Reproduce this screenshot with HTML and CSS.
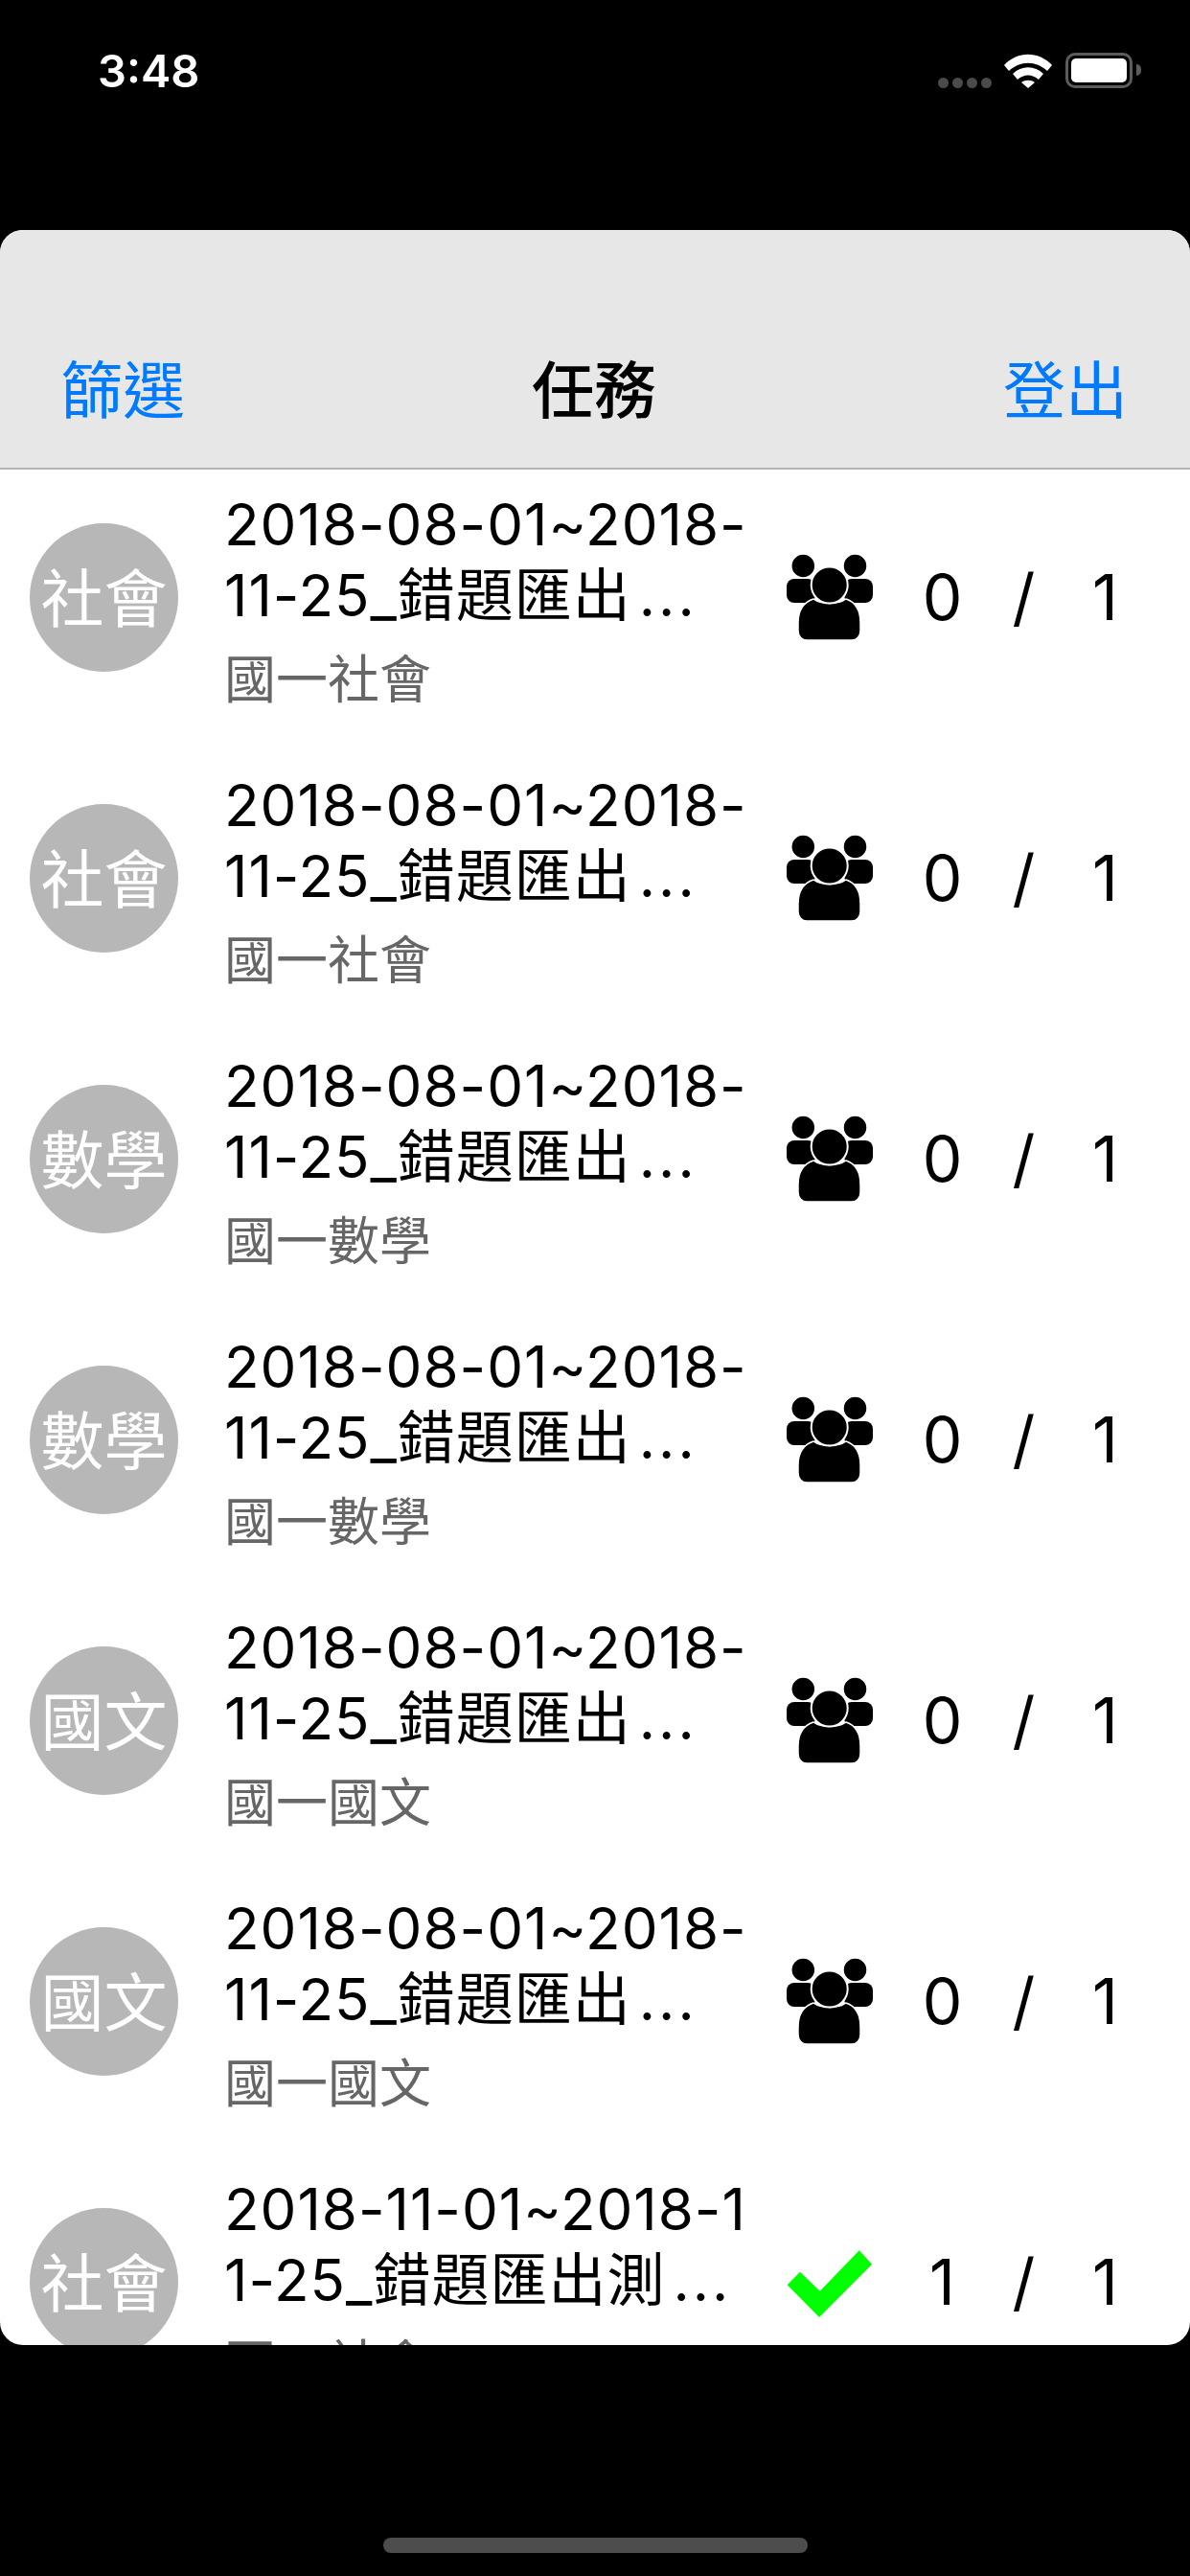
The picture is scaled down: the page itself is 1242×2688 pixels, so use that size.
FILE: index.html
```html
<!DOCTYPE html>
<html lang="zh-Hant">
<head>
    <meta charset="UTF-8">
    <title>任務</title>
    <link rel="stylesheet" href="styles.css">
</head>
<body>
<svg class="defs">
    <symbol id="group" viewBox="0 0 90 90">
        <rect x="0" y="26" width="30" height="25" rx="8"/>
        <rect x="60" y="26" width="30" height="25" rx="8"/>
        <circle cx="17.3" cy="12.5" r="12.5" stroke="#fff" stroke-width="1.5"/>
        <circle cx="71.5" cy="12.5" r="12.5" stroke="#fff" stroke-width="1.5"/>
        <path d="M12 72C12 58 19 50 28 47C36 53 54 53 62 47C71 50 77 58 77 72V80C77 86 73 90 68 90H21C16 90 12 86 12 80Z" stroke="#fff" stroke-width="1.5"/>
        <circle cx="44.7" cy="32.5" r="19" stroke="#fff" stroke-width="2"/>
    </symbol>
    <symbol id="check" viewBox="0 0 90 70">
        <path d="M75.7 .3L89 14.7L34 70L.7 36.3L14 22.7L34.7 42.7Z"/>
    </symbol>
</svg>

<div class="status_bar">
    <span class="time">3:48</span>
    <div class="status_icons">
        <div class="dots"><i></i><i></i><i></i><i></i></div>
        <svg class="wifi" width="50" height="36" viewBox="0 0 50 36">
            <path d="M0 12C14 -3 36 -3 50 12L45 18C33 7 17 7 5 18Z"/>
            <path d="M9 21C18 12 32 12 41 21L36 27C29 21 21 21 14 27Z"/>
            <path d="M18 30C22 27 28 27 32 30L25 36Z"/>
        </svg>
        <div class="battery"><div class="battery_fill"></div></div>
        <div class="battery_nub"></div>
    </div>
</div>

<div class="sheet">
    <div class="nav">
        <a class="nav_btn">篩選</a>
        <h1 class="nav_title">任務</h1>
        <a class="nav_btn">登出</a>
    </div>
    <div class="list">
        <div class="row">
            <div class="badge">社會</div>
            <div class="info">
                <div class="title">2018-08-01~2018-</div>
                <div class="title">11-25_錯題匯出<span class="more">...</span></div>
                <div class="sub">國一社會</div>
            </div>
            <svg class="icon_group"><use href="#group"/></svg>
            <div class="count"><span>0</span><span>/</span><span>1</span></div>
        </div>
        <div class="row">
            <div class="badge">社會</div>
            <div class="info">
                <div class="title">2018-08-01~2018-</div>
                <div class="title">11-25_錯題匯出<span class="more">...</span></div>
                <div class="sub">國一社會</div>
            </div>
            <svg class="icon_group"><use href="#group"/></svg>
            <div class="count"><span>0</span><span>/</span><span>1</span></div>
        </div>
        <div class="row">
            <div class="badge">數學</div>
            <div class="info">
                <div class="title">2018-08-01~2018-</div>
                <div class="title">11-25_錯題匯出<span class="more">...</span></div>
                <div class="sub">國一數學</div>
            </div>
            <svg class="icon_group"><use href="#group"/></svg>
            <div class="count"><span>0</span><span>/</span><span>1</span></div>
        </div>
        <div class="row">
            <div class="badge">數學</div>
            <div class="info">
                <div class="title">2018-08-01~2018-</div>
                <div class="title">11-25_錯題匯出<span class="more">...</span></div>
                <div class="sub">國一數學</div>
            </div>
            <svg class="icon_group"><use href="#group"/></svg>
            <div class="count"><span>0</span><span>/</span><span>1</span></div>
        </div>
        <div class="row">
            <div class="badge">國文</div>
            <div class="info">
                <div class="title">2018-08-01~2018-</div>
                <div class="title">11-25_錯題匯出<span class="more">...</span></div>
                <div class="sub">國一國文</div>
            </div>
            <svg class="icon_group"><use href="#group"/></svg>
            <div class="count"><span>0</span><span>/</span><span>1</span></div>
        </div>
        <div class="row">
            <div class="badge">國文</div>
            <div class="info">
                <div class="title">2018-08-01~2018-</div>
                <div class="title">11-25_錯題匯出<span class="more">...</span></div>
                <div class="sub">國一國文</div>
            </div>
            <svg class="icon_group"><use href="#group"/></svg>
            <div class="count"><span>0</span><span>/</span><span>1</span></div>
        </div>
        <div class="row">
            <div class="badge">社會</div>
            <div class="info">
                <div class="title">2018-11-01~2018-1</div>
                <div class="title">1-25_錯題匯出測<span class="more">...</span></div>
                <div class="sub">國一社會</div>
            </div>
            <svg class="icon_check"><use href="#check"/></svg>
            <div class="count"><span>1</span><span>/</span><span>1</span></div>
        </div>
    </div>
</div>

<div class="home_bar"></div>
</body>
</html>
```

FILE: styles.css
```css
html, body {
    margin: 0;
    height: 2688px;
    overflow: hidden;
}
body {
    background-color: #000;
    font-family: Inter, "Noto Sans CJK TC", sans-serif;
    display: flex;
    flex-direction: column;
    /* the reference is an upscaled capture, everything is a bit soft */
    filter: blur(0.5px);
}
.defs {
    width: 0;
    height: 0;
    display: block;
}

/* status bar */
.status_bar {
    height: 240px;
    padding: 55px 51px 0 102px;
    box-sizing: border-box;
    display: flex;
    justify-content: space-between;
    align-items: flex-start;
    color: #fff;
}
.time {
    font-size: 47px;
    font-weight: 600;
    line-height: 37px;
}
.status_icons {
    display: flex;
    align-items: flex-start;
}
.dots {
    display: flex;
    gap: 4px;
    margin: 26px 13px 0 0;
}
.dots i {
    width: 11px;
    height: 11px;
    border-radius: 50%;
    background-color: #4a4a4a;
}
.wifi {
    fill: #fff;
    margin: 1px 14px 0 0;
}
.battery {
    width: 70px;
    height: 37px;
    box-sizing: border-box;
    border: 3px solid #5c5c5c;
    border-radius: 10px;
    padding: 3px;
}
.battery_fill {
    height: 100%;
    background-color: #fff;
    border-radius: 5px;
}
.battery_nub {
    width: 5px;
    height: 12px;
    margin: 12px 0 0 4px;
    background-color: #5c5c5c;
    border-radius: 0 6px 6px 0;
}

/* sheet */
.sheet {
    height: 2207px;
    background-color: #fff;
    border-radius: 24px;
    overflow: hidden;
}
.nav {
    height: 250px;
    box-sizing: border-box;
    padding: 0 65px 39px 63px;
    background-color: #e7e7e7;
    border-bottom: 2px solid #b4b4b4;
    display: flex;
    justify-content: space-between;
    align-items: flex-end;
    font-family: "Noto Sans CJK TC", sans-serif;
    font-size: 65px;
    line-height: 92px;
}
.nav_btn {
    color: #007aff;
}
.nav_title {
    margin: 0;
    font-size: 65px;
    font-weight: 500;
    color: #000;
}

/* rows */
.row {
    height: 293px;
    box-sizing: border-box;
    padding: 0 49px 27px 31px;
    display: flex;
    align-items: center;
}
.badge {
    width: 155px;
    height: 155px;
    box-sizing: border-box;
    padding-bottom: 6px;
    flex-shrink: 0;
    border-radius: 50%;
    background-color: #b7b7b7;
    color: #fff;
    font-family: "Noto Sans CJK TC", sans-serif;
    font-size: 66px;
    display: flex;
    align-items: center;
    justify-content: center;
    white-space: nowrap;
}
.info {
    width: 587px;
    margin-left: 48px;
    padding-top: 20px;
    flex-shrink: 0;
    align-self: flex-start;
}
.title {
    font-size: 60px;
    line-height: 74px;
    letter-spacing: 1px;
    color: #000;
    white-space: nowrap;
}
.more {
    margin-left: 8px;
    letter-spacing: 3px;
}
.sub {
    font-family: "Noto Sans CJK TC", sans-serif;
    font-size: 54px;
    line-height: 95px;
    color: #666;
}
.icon_group {
    width: 90px;
    height: 90px;
    flex-shrink: 0;
    fill: #000;
}
.icon_check {
    width: 90px;
    height: 70px;
    margin-top: 4px;
    flex-shrink: 0;
    fill: #00ff00;
}
.count {
    display: flex;
    margin-left: 30px;
    font-size: 66px;
    color: #000;
}
.count span {
    width: 85px;
    text-align: center;
}

.home_bar {
    width: 443px;
    height: 16px;
    margin: 201px auto 0;
    background-color: #4d4d4d;
    border-radius: 8px;
}
```
